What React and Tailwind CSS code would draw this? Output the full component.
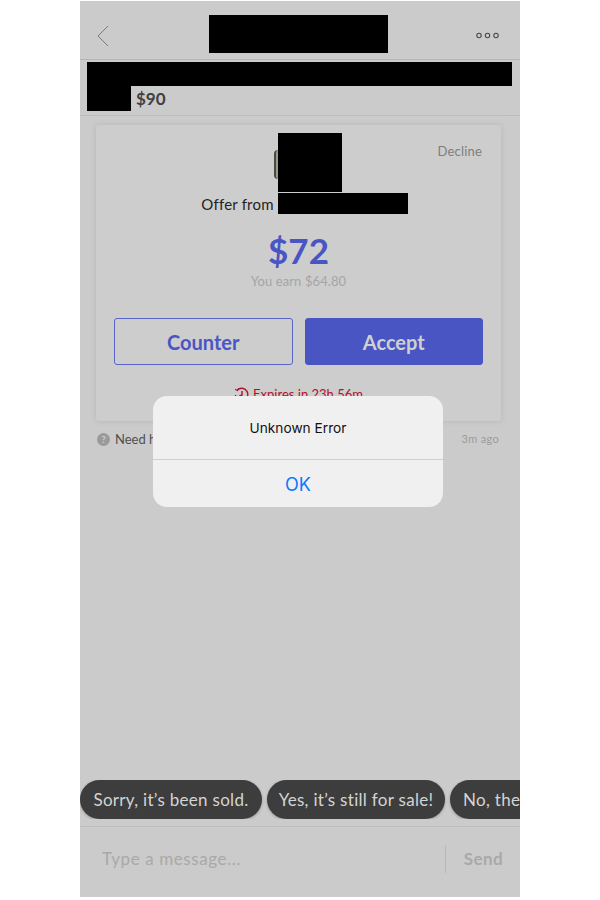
const SANS = { fontFamily: 'Lato, "Noto Sans", sans-serif' };

function Chip({ children, className = "" }) {
  return (
    <div className={`h-[39px] shrink-0 rounded-[20px] bg-[#3d3d3d] flex items-center text-[17px] text-[#d4d4d4] tracking-[0.3px] whitespace-nowrap shadow-[0_1px_3px_rgba(0,0,0,0.25)] ${className}`}>
      {children}
    </div>
  );
}

export default function App() {
  return (
    <div className="w-[600px] h-[900px] bg-white flex justify-center relative" style={SANS}>
      <div className="w-[440px] h-[896px] mt-px bg-[#cbcbcb] flex flex-col overflow-hidden">
        {/* Nav */}
        <header className="h-[59px] shrink-0 border-b border-[#b5b5b5] flex items-center justify-between pl-[17px] pr-[21px]">
          <svg width="12" height="22" viewBox="0 0 12 22" fill="none" stroke="#7a7a7a" strokeWidth="1" className="self-start mt-[24px]">
            <path d="M11 1 L1 11 L11 21" />
          </svg>
          <div className="w-[179px] h-[38px] bg-black self-start mt-[14px] ml-[12px]" />
          <svg width="23" height="7" viewBox="0 0 23 7" fill="none" stroke="#4a4a4a" strokeWidth="1.1" className="mt-[10px]">
            <circle cx="3" cy="3.5" r="2.2" />
            <circle cx="11.5" cy="3.5" r="2.2" />
            <circle cx="20" cy="3.5" r="2.2" />
          </svg>
        </header>

        {/* Listing */}
        <section className="h-[56px] shrink-0 border-b border-[#bdbdbd] pl-[7px] pt-[2px]">
          <div className="w-[425px] h-[24px] bg-black" />
          <div className="flex items-center">
            <div className="w-[44px] h-[25px] bg-black" />
            <span className="ml-[5px] text-[17px] font-bold text-[#3f3f3f]">$90</span>
          </div>
        </section>

        {/* Offer card */}
        <section className="ml-4 mr-[19px] mt-[9px] h-[296px] shrink-0 rounded-[3px] bg-[#cdcdcd] shadow-[0_0_6px_rgba(0,0,0,0.1)] relative flex flex-col items-center px-[18px]">
          <span className="absolute right-[19px] top-[17px] text-[13px] text-[#7e7e7e] tracking-[0.2px]">Decline</span>
          <div className="relative mt-[8px] ml-[22px] w-[64px] h-[59px] bg-black">
            <div className="absolute -left-[4px] top-[17px] w-[4px] h-[29px] rounded-l-full border-l-2 border-[#4a4a45] bg-[#9a9a8a]" />
          </div>
          <div className="flex items-center h-[21px] mt-px ml-[12px]">
            <span className="text-[15px] text-[#1f1f1f] mr-[4px] mt-[1px] tracking-[0.2px]">Offer from</span>
            <div className="w-[130px] h-[21px] bg-black" />
          </div>
          <div className="mt-[14px] text-[35px] leading-[44px] font-bold text-[#4a55c4]">$72</div>
          <div className="text-[13px] leading-[18px] text-[#a5a5a5] tracking-[0.1px]">You earn $64.80</div>
          <div className="w-full flex gap-3 mt-[28px]">
            <button className="flex-1 h-[47px] rounded-[3px] border border-[#5a64c8] text-[#4a55c4] text-[20px] font-bold">Counter</button>
            <button className="flex-1 h-[47px] rounded-[3px] border border-[#4a55c4] bg-[#4a55c4] text-[#d0d0d0] text-[20px] font-bold">Accept</button>
          </div>
          <div className="flex items-center gap-[4px] mt-[20px] text-[13px] text-[#b0102c]">
            <svg width="15" height="15" viewBox="0 0 15 15" fill="none" stroke="#b0102c" strokeWidth="1.4">
              <path d="M3.2 3 A6.2 6.2 0 1 1 1.4 8" />
              <path d="M1.2 2.2 L3.4 3.6 L5 1.4" strokeWidth="1.1" />
              <path d="M8 4 V8 L5 9.5" />
            </svg>
            <span>Expires in 23h 56m</span>
          </div>
        </section>

        {/* Status */}
        <div className="flex items-center justify-between mt-[10px] pl-[17px] pr-[21px] h-[16px] shrink-0">
          <div className="flex items-center gap-[5px] pt-[1px] text-[13px] text-[#4f4f4f]">
            <span className="w-[13px] h-[13px] rounded-full bg-[#9a9a9a] text-[#cbcbcb] text-[10px] font-bold flex items-center justify-center">?</span>
            <span>Need help?</span>
          </div>
          <span className="text-[11px] text-[#9b9b9b] tracking-[0.3px]">3m ago</span>
        </div>

        <div className="flex-1" />

        {/* Quick replies */}
        <div className="flex gap-[5px] h-[39px] shrink-0 mb-[7px] overflow-hidden">
          <Chip className="w-[182px] justify-center">Sorry, it’s been sold.</Chip>
          <Chip className="w-[178px] justify-center">Yes, it’s still for sale!</Chip>
          <Chip className="w-[70px] pl-[13px] rounded-r-none">No, the</Chip>
        </div>

        {/* Composer */}
        <footer className="h-[71px] shrink-0 border-t border-[#bcbcbc] flex items-start pl-[22px] pr-[17px] pt-[18px]">
          <span className="flex-1 text-[17px] leading-[28px] text-[#a9a9a9] tracking-[0.6px]">Type a message...</span>
          <div className="w-px h-[28px] bg-[#b8b8b8] mr-[18px]" />
          <span className="text-[17px] leading-[28px] font-bold text-[#a9a9a9] tracking-[0.4px]">Send</span>
        </footer>
      </div>

      {/* Alert */}
      <div className="absolute left-[153px] top-[396px] w-[290px] h-[111px] rounded-[14px] bg-[#f0f0f0] flex flex-col" style={{ fontFamily: 'Inter, "Liberation Sans", sans-serif' }}>
        <div className="h-[64px] shrink-0 border-b border-[#cfcfcf] flex items-center justify-center pt-[1px] text-[13.7px] text-[#111]">Unknown Error</div>
        <div className="flex-1 flex items-center justify-center pt-[1px] text-[18px] text-[#0a7aff]">OK</div>
      </div>
    </div>
  );
}
